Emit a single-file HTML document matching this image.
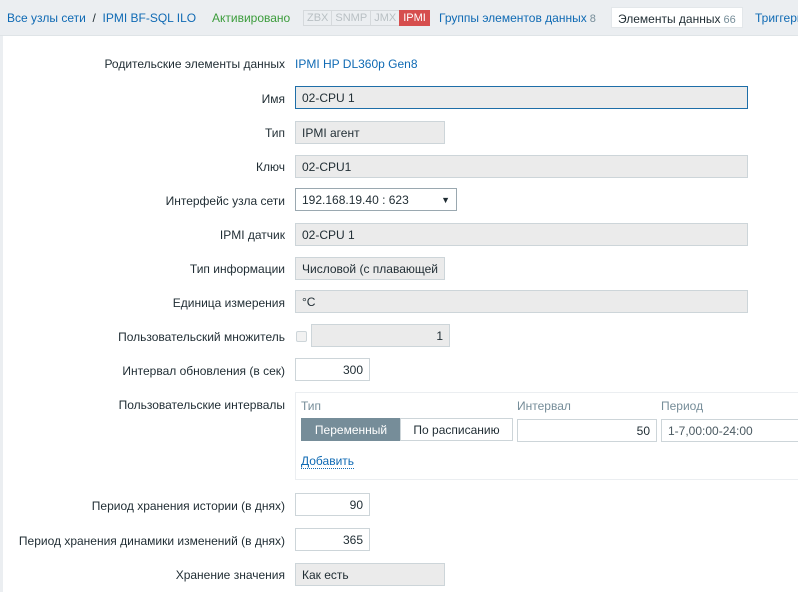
<!DOCTYPE html>
<html><head><meta charset="utf-8"><style>
*{box-sizing:border-box;margin:0;padding:0}
body{width:798px;height:592px;overflow:hidden;background:#ebeef1;font-family:"Liberation Sans",Arial,sans-serif;font-size:12px;color:#1f2c33;position:relative}
.hdr{position:absolute;left:0;top:0;width:798px;height:36px;background:#ebeef1;border-bottom:1px solid #dfe4e7}
.h{position:absolute;top:11px;white-space:nowrap}
a,.lnk{color:#0f6ab4;text-decoration:none}
.cnt{color:#768d99;font-size:11px}
.main{position:absolute;left:3px;top:36px;width:795px;height:556px;background:#fff}
.lbl{position:absolute;right:513px;white-space:nowrap;text-align:right}
.in{position:absolute;height:23px;border:1px solid #cdd5d9;background:#ebebeb;padding:1px 6px 0;line-height:21px;white-space:nowrap;overflow:hidden}
.w{background:#fff}
.r{text-align:right}
.tag{display:inline-block;border:1px solid #d5d9dc;color:#b9c0c4;font-size:11px;padding:0 3px;line-height:14px;margin-right:-1px;background:#ebeef1}
</style></head><body>
<div class="hdr">
<span class="h" style="left:7px"><a>Все узлы сети</a> &nbsp;/&nbsp; <a>IPMI BF-SQL ILO</a></span>
<span class="h" style="left:212px;color:#3b9c3b">Активировано</span>
<span class="h" style="left:303px;top:10px"><span class="tag">ZBX</span><span class="tag">SNMP</span><span class="tag">JMX</span><span class="tag" style="background:#d64e4e;color:#fff;border-color:#d64e4e">IPMI</span></span>
<span class="h" style="left:439px"><a>Группы элементов данных</a><span class="cnt"> 8</span></span>
<span class="h" style="left:611px;top:7px;background:#fff;padding:4px 6px;border:1px solid #e3e7ea;height:21px">Элементы данных<span class="cnt"> 66</span></span>
<span class="h" style="left:755px"><a>Триггеры</a></span>
</div>
<div class="main"></div>
<div class="lbl" style="top:57px">Родительские элементы данных</div><div style="position:absolute;left:295px;top:57px" class="lnk">IPMI HP DL360p Gen8</div>
<div class="lbl" style="top:92px">Имя</div><div class="in" style="left:295px;top:86px;width:453px;border-color:#1e6ea8">02-CPU 1</div>
<div class="lbl" style="top:126px">Тип</div><div class="in" style="left:295px;top:121px;width:150px">IPMI агент</div>
<div class="lbl" style="top:160px">Ключ</div><div class="in" style="left:295px;top:155px;width:453px">02-CPU1</div>
<div class="lbl" style="top:194px">Интерфейс узла сети</div><div class="in w" style="left:295px;top:188px;width:162px;border-color:#9aa8b0">192.168.19.40 : 623<span style="position:absolute;right:6px;font-size:9px">▼</span></div>
<div class="lbl" style="top:228px">IPMI датчик</div><div class="in" style="left:295px;top:223px;width:453px">02-CPU 1</div>
<div class="lbl" style="top:262px">Тип информации</div><div class="in" style="left:295px;top:257px;width:150px">Числовой (с плавающей</div>
<div class="lbl" style="top:296px">Единица измерения</div><div class="in" style="left:295px;top:290px;width:453px">°C</div>
<div class="lbl" style="top:330px">Пользовательский множитель</div><div style="position:absolute;left:296px;top:331px;width:11px;height:11px;border:1px solid #cdd5d9;border-radius:2px;background:#f2f2f2"></div><div class="in r" style="left:311px;top:324px;width:139px">1</div>
<div class="lbl" style="top:364px">Интервал обновления (в сек)</div><div class="in w r" style="left:295px;top:358px;width:75px">300</div>
<div class="lbl" style="top:398px">Пользовательские интервалы</div>
<div style="position:absolute;left:295px;top:392px;width:510px;height:88px;border:1px solid #ebeef1"></div>
<div style="position:absolute;left:301px;top:399px;color:#768d99">Тип</div>
<div style="position:absolute;left:517px;top:399px;color:#768d99">Интервал</div>
<div style="position:absolute;left:661px;top:399px;color:#768d99">Период</div>
<div class="in" style="left:301px;top:418px;width:100px;background:#768d99;color:#fff;border-color:#768d99;text-align:center">Переменный</div>
<div class="in w" style="left:400px;top:418px;width:113px;text-align:center;border-color:#cdd5d9">По расписанию</div>
<div class="in w r" style="left:517px;top:419px;width:140px">50</div>
<div class="in w" style="left:661px;top:419px;width:140px;color:#4b5a62">1-7,00:00-24:00</div>
<div style="position:absolute;left:301px;top:454px" class="lnk"><span style="border-bottom:1px dotted #0f6ab4">Добавить</span></div>
<div class="lbl" style="top:499px">Период хранения истории (в днях)</div><div class="in w r" style="left:295px;top:493px;width:75px">90</div>
<div class="lbl" style="top:534px">Период хранения динамики изменений (в днях)</div><div class="in w r" style="left:295px;top:528px;width:75px">365</div>
<div class="lbl" style="top:568px">Хранение значения</div><div class="in" style="left:295px;top:563px;width:150px">Как есть</div>
</body></html>
